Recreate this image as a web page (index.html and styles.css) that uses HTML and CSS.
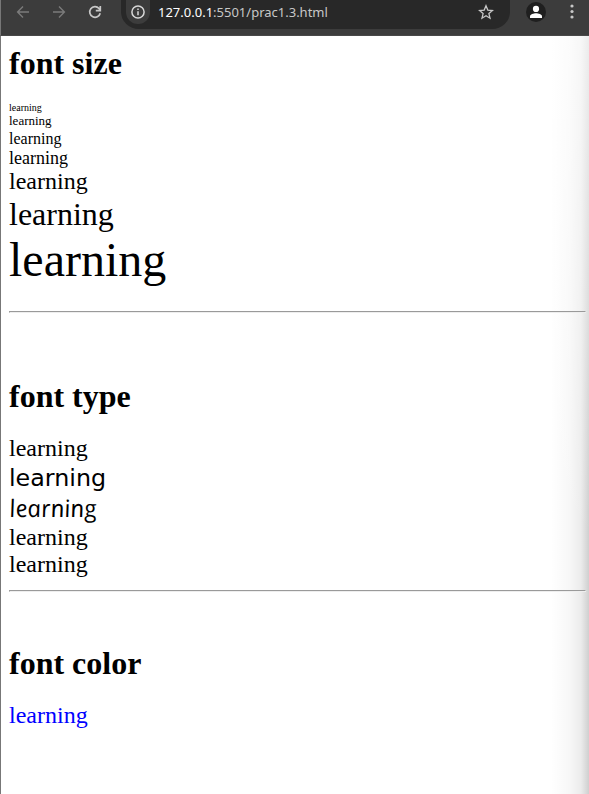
FILE: index.html
```html
<!DOCTYPE html>
<html lang="en">
<head>
<meta charset="utf-8">
<title>prac1.3</title>
<link rel="stylesheet" href="styles.css">
</head>
<body>
<header class="toolbar">
  <svg class="nav dim back" viewBox="0 0 14 14"><path d="M13 7H2M7 1.6 1.6 7 7 12.4"/></svg>
  <svg class="nav dim forward" viewBox="0 0 14 14"><path d="M1 7h11M7 1.6 12.4 7 7 12.4"/></svg>
  <svg class="nav reload" viewBox="0 0 14 14"><path d="M12.2 8.2A5.3 5.3 0 1 1 11 3.5L12 4.6M12.3 1v4.7H7.8"/></svg>
  <div class="address">
    <span class="info"><svg viewBox="0 0 14 14"><circle cx="7" cy="7" r="6.1"/><path d="M7 6.3v4M7 3.6v1.5"/></svg></span>
    <span class="url"><b>127.0.0.1</b>:5501/prac1.3.html</span>
    <svg class="star" viewBox="0 0 16 16"><path d="m8 1.7 1.8 4.4 4.7.4-3.6 3.1 1.1 4.6L8 11.7l-4 2.5 1.1-4.6-3.6-3.1 4.7-.4z"/></svg>
  </div>
  <svg class="profile" viewBox="0 0 20 20"><circle class="disc" cx="10" cy="10" r="10"/><circle cx="10" cy="6.9" r="3.1"/><path d="M4 16v-1.7c0-2 3.7-3 6-3s6 1 6 3V16z"/></svg>
  <svg class="menu" viewBox="0 0 4 16"><circle cx="2" cy="2" r="1.6"/><circle cx="2" cy="7.5" r="1.6"/><circle cx="2" cy="13" r="1.6"/></svg>
</header>
<main class="page">
  <section class="sizes">
    <h1>font size</h1>
    <div class="s1">learning</div>
    <div class="s2">learning</div>
    <div class="s3">learning</div>
    <div class="s4">learning</div>
    <div class="s5">learning</div>
    <div class="s6">learning</div>
    <div class="s7">learning</div>
  </section>
  <hr>
  <section class="types">
    <h1>font type</h1>
    <div>learning</div>
    <div class="verdana">learning</div>
    <div class="comic"><span>learning</span></div>
    <div>learning</div>
    <div>learning</div>
  </section>
  <hr>
  <section class="colors">
    <h1>font color</h1>
    <div class="blue">learning</div>
  </section>
</main>
</body>
</html>
```
FILE: styles.css
```css
* { box-sizing: border-box; }
body {
  margin: 0;
  height: 794px;
  overflow: hidden;
  color: #000;
  background: #fff;
  font-family: "Liberation Serif", "Times New Roman", serif;
}
.toolbar {
  display: flex;
  align-items: flex-start;
  height: 36px;
  background: #3c3c3c;
  border-left: 1px solid #777;
  border-bottom: 1px solid #484848;
}
svg { display: block; flex: none; }
.nav {
  width: 14px;
  height: 14px;
  margin-top: 5px;
  fill: none;
  stroke: #c7c7c7;
  stroke-width: 1.7;
}
.dim { stroke: #7b7b7b; stroke-width: 1.4; }
.back { margin-left: 15px; }
.forward { margin-left: 22px; }
.reload { margin-left: 22px; }
.address {
  display: flex;
  width: 389px;
  height: 29px;
  margin-left: 19px;
  background: #282828;
  border-radius: 0 0 18px 18px / 0 0 17px 17px;
}
.info {
  width: 24px;
  height: 24px;
  margin-left: 5px;
  padding: 5px;
  border-radius: 0 0 12px 12px;
  background: #3c3c3c;
}
.info svg { width: 14px; height: 14px; fill: none; stroke: #d8d8d8; stroke-width: 1.5; }
.url {
  width: 320px;
  margin-left: 8px;
  font: 13px/25px "Noto Sans", sans-serif;
  color: #c7c7c7;
}
.url b { font-weight: 400; color: #fff; }
.star { width: 16px; height: 16px; margin-top: 4px; fill: none; stroke: #c7c7c7; stroke-width: 1.3; }
.profile { width: 20px; height: 20px; margin: 2px 0 0 16px; fill: #fff; }
.disc { fill: #1f1f1f; }
.menu { width: 4px; height: 16px; margin: 4px 0 0 24px; fill: #c7c7c7; }
.page {
  height: 758px;
  padding: 9px 3px 0 8px;
  border-left: 1px solid #777;
  background:
    linear-gradient(180deg, rgba(255, 255, 255, .6), transparent 500px),
    linear-gradient(90deg, transparent 550px, rgba(0, 0, 0, .03) 568px, rgba(0, 0, 0, .08) 580px, rgba(0, 0, 0, .19) 588px);
}
h1 { margin: 0 0 21px; font-size: 32px; line-height: 36px; }
hr { margin: 0; }
.s1 { font-size: 10px; line-height: 12px; }
.s2 { font-size: 13px; line-height: 14px; }
.s3 { font-size: 16px; line-height: 21px; }
.s4 { font-size: 18px; line-height: 18px; }
.s5 { font-size: 24px; line-height: 29px; }
.s6 { font-size: 32px; line-height: 36px; }
.s7 { font-size: 48px; line-height: 56px; }
.sizes { height: 266px; }
.types { height: 277px; padding-top: 65px; font-size: 24px; line-height: 27px; }
.types .verdana { font-family: Verdana, "DejaVu Sans", sans-serif; font-size: 23.8px; line-height: 32px; }
.types .comic { font-family: "Comic Sans MS", "Open Sans", sans-serif; font-size: 24px; font-style: italic; font-weight: 500; line-height: 30px; }
.comic span { display: inline-block; transform: translateY(-1px) skewX(10deg); }
.colors { padding-top: 53px; font-size: 24px; line-height: 27px; }
.blue { color: #00f; }
```
